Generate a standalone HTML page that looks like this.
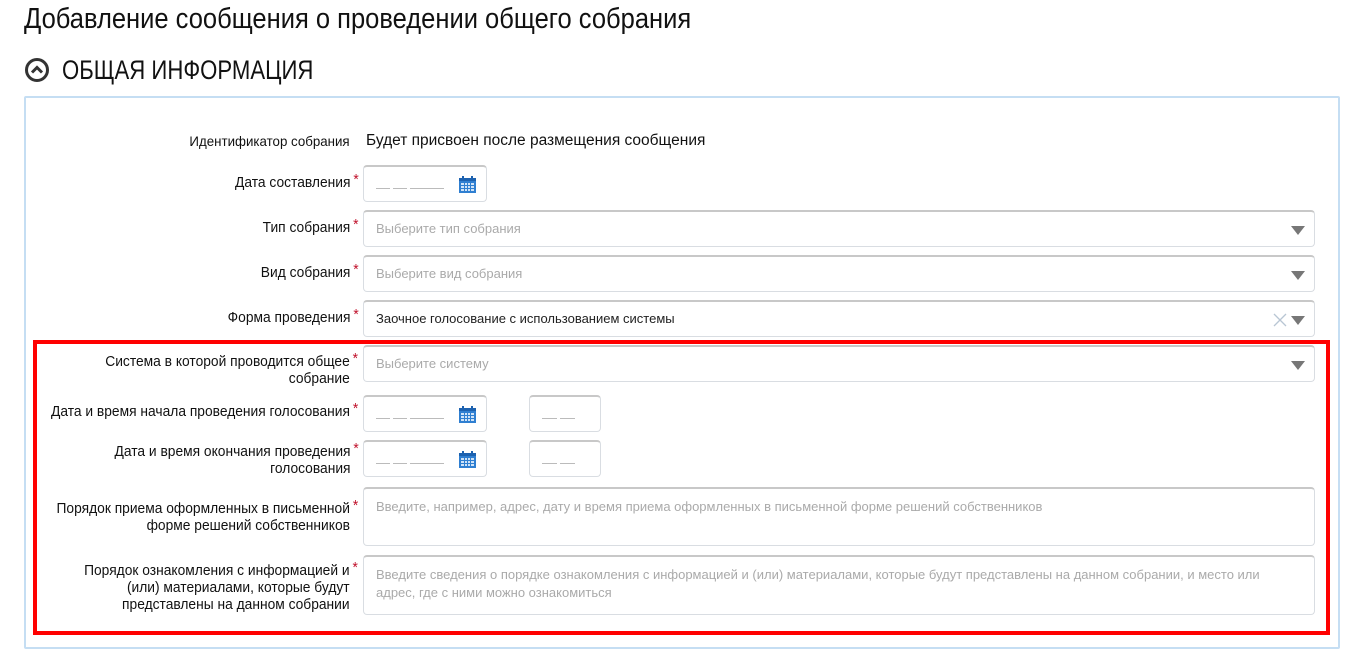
<!DOCTYPE html>
<html><head><meta charset="utf-8"><style>
body{margin:0;width:1360px;height:672px;background:#fff;position:relative;overflow:hidden;font-family:"Liberation Sans",sans-serif;color:#111}
.a{position:absolute}
.h1{left:24px;top:3px;font-size:29px;white-space:nowrap;transform:scaleX(0.88);transform-origin:left top}
.h2{left:62px;top:55px;font-size:27px;white-space:nowrap;transform:scaleX(0.82);transform-origin:left top}
.panel{left:24px;top:96px;width:1312px;height:549px;border:2px solid #c5def3;border-radius:2px}
.lbl{right:1010px;font-size:15px;text-align:right;line-height:17px;white-space:nowrap;transform:scaleX(0.92);transform-origin:right top}
.st{color:#c0102a;position:absolute;right:-9px;top:-3px;font-size:15px}
.inp{left:363px;border:1px solid #d9dde2;border-top:2px solid #c8c8c8;border-radius:4px;box-sizing:border-box;background:#fff;font-size:13px;color:#aaa}
.sel{width:952px;height:37px;padding:9px 12px}
.tri{position:absolute;right:9px;top:14px;width:0;height:0;border-left:7px solid transparent;border-right:7px solid transparent;border-top:9px solid #777}
.date{width:124px;height:37px}
.time{left:529px;width:72px;height:37px}
.dash{position:absolute;top:21px;height:1px;background:#bbb}
.cal{position:absolute;left:95px;top:9px;width:17px;height:17px}
.ta{width:952px;padding:9px 12px;line-height:18px}
</style></head><body>
<div class="a h1">Добавление сообщения о проведении общего собрания</div>
<svg class="a" style="left:24px;top:57px" width="26" height="26" viewBox="0 0 26 26"><circle cx="13" cy="13" r="10.5" fill="none" stroke="#333" stroke-width="3"/><path d="M8 15.5 L13 10.5 L18 15.5" fill="none" stroke="#333" stroke-width="3"/></svg>
<div class="a h2">ОБЩАЯ ИНФОРМАЦИЯ</div>
<div class="a panel"></div>

<div class="a lbl" style="top:133px;font-size:14px;transform:scaleX(0.95)">Идентификатор собрания</div>
<div class="a" style="left:366px;top:132px;font-size:15.5px;white-space:nowrap">Будет присвоен после размещения сообщения</div>

<div class="a lbl" style="top:174px">Дата составления<span class="st">*</span></div>
<div class="a inp date" style="top:165px"><div class="dash" style="left:12px;width:14px"></div><div class="dash" style="left:29px;width:14px"></div><div class="dash" style="left:46px;width:34px"></div><svg class="cal" viewBox="0 0 17 17"><rect x="0" y="2" width="17" height="15" fill="#2f7fd1"/><rect x="0" y="2" width="17" height="3" fill="#1d62b0"/><g fill="#cfe3f7"><rect x="2" y="7" width="3" height="2"/><rect x="6" y="7" width="2" height="2"/><rect x="9" y="7" width="2" height="2"/><rect x="12" y="7" width="3" height="2"/><rect x="2" y="10" width="3" height="2"/><rect x="6" y="10" width="2" height="2"/><rect x="9" y="10" width="2" height="2"/><rect x="12" y="10" width="3" height="2"/><rect x="2" y="13" width="3" height="2"/><rect x="6" y="13" width="2" height="2"/><rect x="9" y="13" width="2" height="2"/><rect x="12" y="13" width="3" height="2"/></g><rect x="3" y="0" width="2" height="3" fill="#1d62b0"/><rect x="12" y="0" width="2" height="3" fill="#1d62b0"/></svg></div>

<div class="a lbl" style="top:219px">Тип собрания<span class="st">*</span></div>
<div class="a inp sel" style="top:210px">Выберите тип собрания<div class="tri"></div></div>
<div class="a lbl" style="top:264px">Вид собрания<span class="st">*</span></div>
<div class="a inp sel" style="top:255px">Выберите вид собрания<div class="tri"></div></div>
<div class="a lbl" style="top:309px">Форма проведения<span class="st">*</span></div>
<div class="a inp sel" style="top:300px;color:#222">Заочное голосование с использованием системы<div class="tri"></div><svg style="position:absolute;right:27px;top:11px" width="14" height="14"><path d="M1 1L13 13M13 1L1 13" stroke="#b8c6d4" stroke-width="1.3"/></svg></div>

<div class="a lbl" style="top:353px">Система в которой проводится общее<span class="st">*</span><br>собрание</div>
<div class="a inp sel" style="top:345px">Выберите систему<div class="tri"></div></div>

<div class="a lbl" style="top:403px">Дата и время начала проведения голосования<span class="st">*</span></div>
<div class="a inp date" style="top:395px"><div class="dash" style="left:12px;width:14px"></div><div class="dash" style="left:29px;width:14px"></div><div class="dash" style="left:46px;width:34px"></div><svg class="cal" viewBox="0 0 17 17"><rect x="0" y="2" width="17" height="15" fill="#2f7fd1"/><rect x="0" y="2" width="17" height="3" fill="#1d62b0"/><g fill="#cfe3f7"><rect x="2" y="7" width="3" height="2"/><rect x="6" y="7" width="2" height="2"/><rect x="9" y="7" width="2" height="2"/><rect x="12" y="7" width="3" height="2"/><rect x="2" y="10" width="3" height="2"/><rect x="6" y="10" width="2" height="2"/><rect x="9" y="10" width="2" height="2"/><rect x="12" y="10" width="3" height="2"/><rect x="2" y="13" width="3" height="2"/><rect x="6" y="13" width="2" height="2"/><rect x="9" y="13" width="2" height="2"/><rect x="12" y="13" width="3" height="2"/></g><rect x="3" y="0" width="2" height="3" fill="#1d62b0"/><rect x="12" y="0" width="2" height="3" fill="#1d62b0"/></svg></div>
<div class="a inp time" style="top:395px"><div class="dash" style="left:12px;width:15px"></div><div class="dash" style="left:30px;width:15px"></div></div>

<div class="a lbl" style="top:443px">Дата и время окончания проведения<span class="st">*</span><br>голосования</div>
<div class="a inp date" style="top:440px"><div class="dash" style="left:12px;width:14px"></div><div class="dash" style="left:29px;width:14px"></div><div class="dash" style="left:46px;width:34px"></div><svg class="cal" viewBox="0 0 17 17"><rect x="0" y="2" width="17" height="15" fill="#2f7fd1"/><rect x="0" y="2" width="17" height="3" fill="#1d62b0"/><g fill="#cfe3f7"><rect x="2" y="7" width="3" height="2"/><rect x="6" y="7" width="2" height="2"/><rect x="9" y="7" width="2" height="2"/><rect x="12" y="7" width="3" height="2"/><rect x="2" y="10" width="3" height="2"/><rect x="6" y="10" width="2" height="2"/><rect x="9" y="10" width="2" height="2"/><rect x="12" y="10" width="3" height="2"/><rect x="2" y="13" width="3" height="2"/><rect x="6" y="13" width="2" height="2"/><rect x="9" y="13" width="2" height="2"/><rect x="12" y="13" width="3" height="2"/></g><rect x="3" y="0" width="2" height="3" fill="#1d62b0"/><rect x="12" y="0" width="2" height="3" fill="#1d62b0"/></svg></div>
<div class="a inp time" style="top:440px"><div class="dash" style="left:12px;width:15px"></div><div class="dash" style="left:30px;width:15px"></div></div>

<div class="a lbl" style="top:500px">Порядок приема оформленных в письменной<span class="st">*</span><br>форме решений собственников</div>
<div class="a inp ta" style="top:487px;height:59px">Введите, например, адрес, дату и время приема оформленных в письменной форме решений собственников</div>
<div class="a lbl" style="top:562px">Порядок ознакомления с информацией и<span class="st">*</span><br>(или) материалами, которые будут<br>представлены на данном собрании</div>
<div class="a inp ta" style="top:555px;height:60px">Введите сведения о порядке ознакомления с информацией и (или) материалами, которые будут представлены на данном собрании, и место или адрес, где с ними можно ознакомиться</div>

<div class="a" style="left:33px;top:340px;width:1289px;height:287px;border:4px solid #f00"></div>
</body></html>
